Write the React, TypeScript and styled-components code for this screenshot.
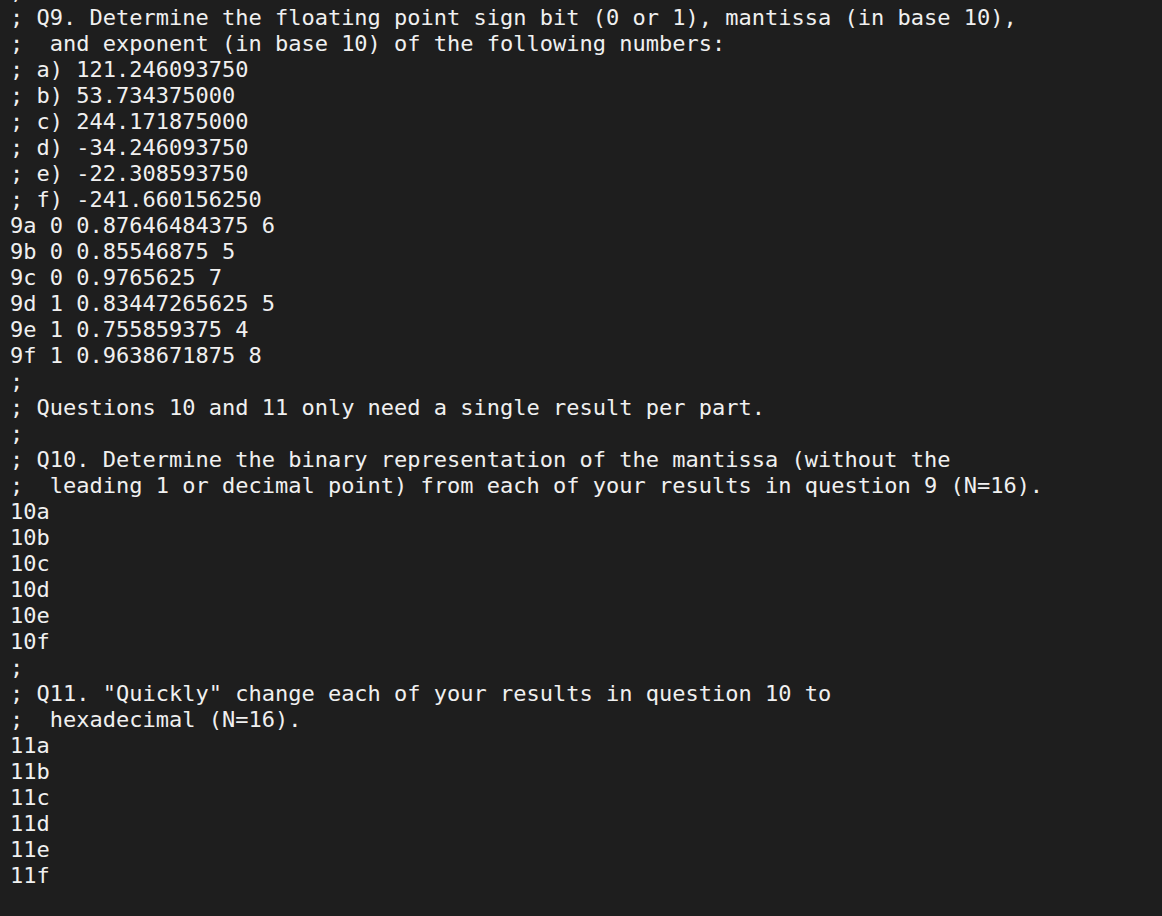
import React from "react";
import styled, { createGlobalStyle } from "styled-components";

const Global = createGlobalStyle`
  html, body {
    margin: 0;
    padding: 0;
    background: #1e1e1e;
    height: 100%;
    overflow: hidden;
  }
`;

const Editor = styled.div`
  box-sizing: border-box;
  width: 1162px;
  height: 916px;
  overflow: hidden;
  background: #1e1e1e;
  padding: 0 0 0 10px;
`;

const Lines = styled.pre`
  margin: -21px 0 0 0;
  font-family: "DejaVu Sans Mono", "Liberation Mono", monospace;
  font-size: 22px;
  line-height: 26px;
  color: #f0f0f0;
  white-space: pre;
`;

const Line = styled.div`
  height: 26px;
`;

const text = [
  ";",
  "; Q9. Determine the floating point sign bit (0 or 1), mantissa (in base 10),",
  ";  and exponent (in base 10) of the following numbers:",
  "; a) 121.246093750",
  "; b) 53.734375000",
  "; c) 244.171875000",
  "; d) -34.246093750",
  "; e) -22.308593750",
  "; f) -241.660156250",
  "9a 0 0.87646484375 6",
  "9b 0 0.85546875 5",
  "9c 0 0.9765625 7",
  "9d 1 0.83447265625 5",
  "9e 1 0.755859375 4",
  "9f 1 0.9638671875 8",
  ";",
  "; Questions 10 and 11 only need a single result per part.",
  ";",
  "; Q10. Determine the binary representation of the mantissa (without the",
  ";  leading 1 or decimal point) from each of your results in question 9 (N=16).",
  "10a",
  "10b",
  "10c",
  "10d",
  "10e",
  "10f",
  ";",
  '; Q11. "Quickly" change each of your results in question 10 to',
  ";  hexadecimal (N=16).",
  "11a",
  "11b",
  "11c",
  "11d",
  "11e",
  "11f",
];

export default function App() {
  return (
    <>
      <Global />
      <Editor>
        <Lines>
          {text.map((t, i) => (
            <Line key={i}>{t}</Line>
          ))}
        </Lines>
      </Editor>
    </>
  );
}
